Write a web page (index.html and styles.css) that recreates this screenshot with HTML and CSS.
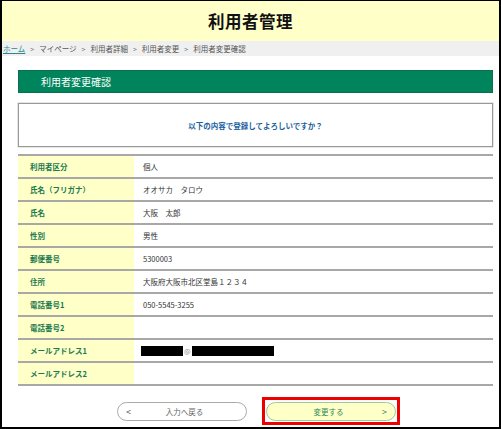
FILE: index.html
```html
<!DOCTYPE html>
<html lang="ja">
<head>
<meta charset="utf-8">
<link rel="stylesheet" href="styles.css">
</head>
<body>
<div class="frame">
  <header class="header"><h1>利用者管理</h1></header>
  <nav class="crumbs">
    <a class="home">ホーム</a><span class="sep">&gt;</span><span>マイページ</span><span class="sep">&gt;</span><span>利用者詳細</span><span class="sep">&gt;</span><span>利用者変更</span><span class="sep">&gt;</span><span>利用者変更確認</span>
  </nav>
  <main class="main">
    <h2 class="bar">利用者変更確認</h2>
    <div class="notice">以下の内容で登録してよろしいですか？</div>
    <div class="table">
      <div class="row"><div class="lbl">利用者区分</div><div class="val">個人</div></div>
      <div class="row"><div class="lbl">氏名（フリガナ）</div><div class="val">オオサカ　タロウ</div></div>
      <div class="row"><div class="lbl">氏名</div><div class="val">大阪　太郎</div></div>
      <div class="row"><div class="lbl">性別</div><div class="val">男性</div></div>
      <div class="row"><div class="lbl">郵便番号</div><div class="val">5300003</div></div>
      <div class="row"><div class="lbl">住所</div><div class="val">大阪府大阪市北区堂島１２３４</div></div>
      <div class="row"><div class="lbl">電話番号1</div><div class="val">050-5545-3255</div></div>
      <div class="row"><div class="lbl">電話番号2</div><div class="val"></div></div>
      <div class="row"><div class="lbl">メールアドレス1</div><div class="val"><span class="mask m1"></span><span class="at">@</span><span class="mask m2"></span></div></div>
      <div class="row"><div class="lbl">メールアドレス2</div><div class="val"></div></div>
    </div>
    <div class="actions">
      <button class="btn back"><span class="arr">&lt;</span><span class="txt">入力へ戻る</span></button>
      <div class="hl"><button class="btn go"><span class="txt">変更する</span><span class="arr">&gt;</span></button></div>
    </div>
  </main>
</div>
</body>
</html>
```
FILE: styles.css
```css
* { box-sizing: border-box; }
html, body { margin: 0; padding: 0; }
body {
  font-family: "Noto Sans CJK JP", "Noto Sans", sans-serif;
  background: #fff;
  color: #333;
}
.frame {
  width: 501px;
  height: 429px;
  border-top: 1px solid #000;
  border-left: 2px solid #000;
  border-right: 2px solid #000;
  border-bottom: 2px solid #000;
  overflow: hidden;
}
.header {
  height: 40px;
  background: #ffffc8;
  display: flex;
  align-items: center;
  justify-content: center;
}
.header h1 {
  margin: 0;
  font-size: 16.5px;
  font-weight: bold;
  color: #111;
  letter-spacing: 0.5px;
}
.crumbs {
  height: 15px;
  background: #f0f0f0;
  display: flex;
  align-items: center;
  padding-left: 1px;
  font-size: 7.5px;
  color: #555;
  white-space: nowrap;
}
.crumbs .home { color: #2a8a8a; text-decoration: underline; }
.crumbs .sep { margin: 0 5px; color: #777; font-size: 7px; }
.main {
  padding: 14px 6px 0 16px;
}
.bar {
  margin: 0;
  height: 23px;
  background: #00845c;
  border: 1px solid #0d6f4f;
  color: #fff;
  font-size: 10px;
  font-weight: normal;
  display: flex;
  align-items: center;
  padding-left: 22px;
}
.notice {
  margin-top: 10px;
  height: 44px;
  border: 1px solid #999;
  box-shadow: 0 0 0 0.5px #ccc;
  display: flex;
  align-items: center;
  justify-content: center;
  color: #1a5fa0;
  font-size: 7.5px;
  font-weight: bold;
}
.table {
  margin-top: 7px;
  border-top: 2px solid #a8a8a8;
}
.row {
  display: flex;
  height: 23px;
  border-bottom: 2px solid #a8a8a8;
}
.lbl {
  width: 116px;
  background: #ffffc8;
  color: #1a7a50;
  font-weight: bold;
  font-size: 7.5px;
  display: flex;
  align-items: center;
  padding-left: 12px;
}
.val {
  flex: 1;
  display: flex;
  align-items: center;
  padding-left: 9px;
  font-size: 7.5px;
  color: #333;
}
.mask { display: inline-block; height: 10px; background: #000; }
.m1 { width: 42px; margin-left: -2px; }
.m2 { width: 82px; }
.at { font-size: 7px; color: #888; margin: 0 1px; }
.actions {
  display: flex;
  justify-content: center;
  align-items: center;
  gap: 15px;
  margin-top: 11px;
  padding-left: 6px;
}
.btn {
  width: 130px;
  height: 19px;
  border-radius: 10px;
  font-family: inherit;
  font-size: 7.5px;
  display: flex;
  align-items: center;
  padding: 0 8px;
}
.btn .txt { flex: 1; text-align: center; }
.back {
  background: #fff;
  border: 1px solid #aaa;
  color: #666;
}
.back .arr { font-size: 9px; color: #555; }
.hl {
  border: 3px solid #e00;
  padding: 2px 1px 1px;
}
.go {
  background: #ffffc8;
  border: 1px solid #9c9;
  color: #2a8a5a;
}
.go .arr { font-size: 9px; color: #2a8a5a; }
```
